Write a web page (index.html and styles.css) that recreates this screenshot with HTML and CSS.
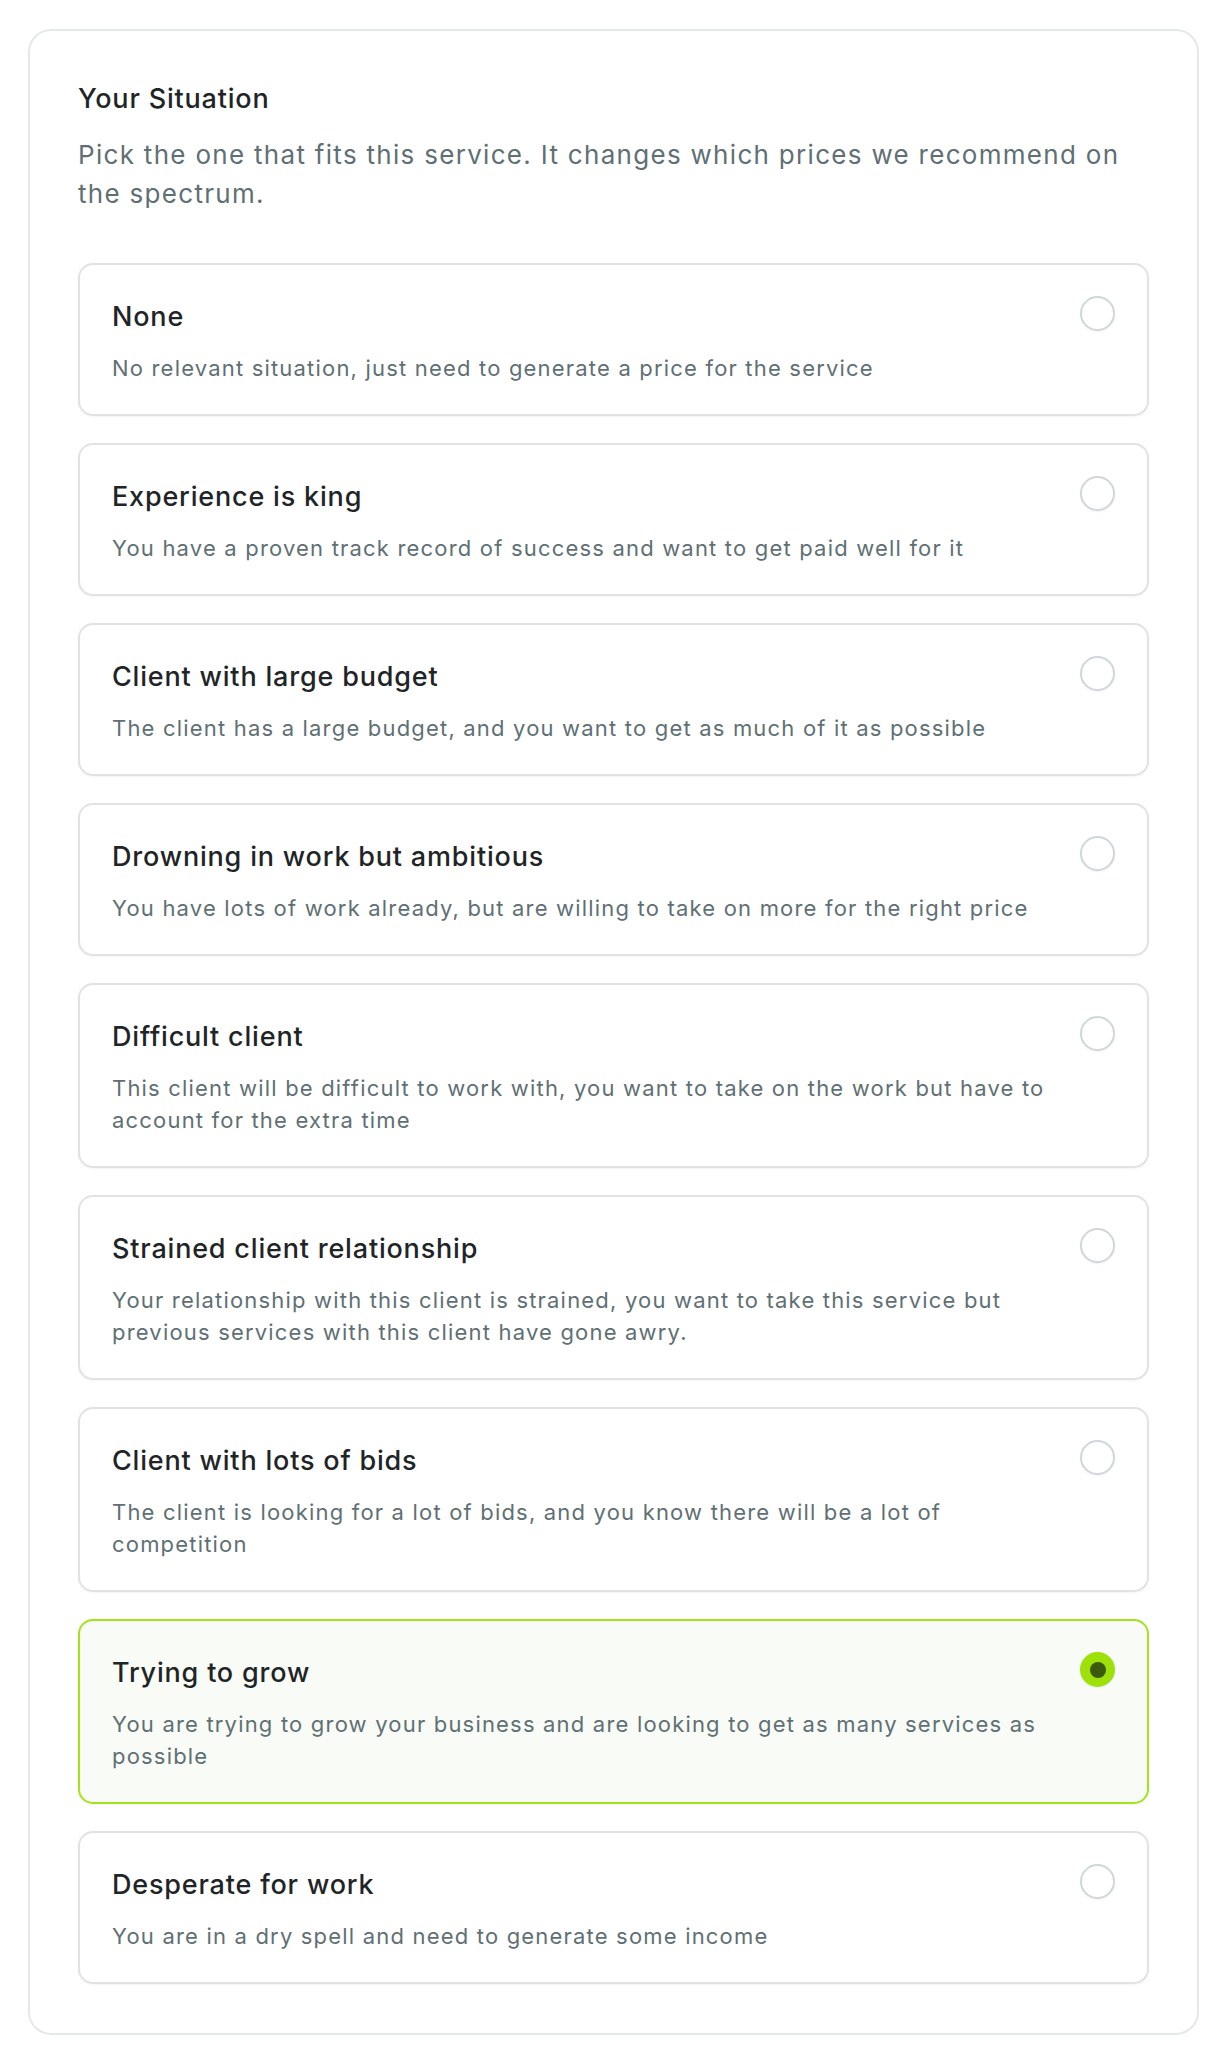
FILE: index.html
```html
<!DOCTYPE html>
<html lang="en">
<head>
    <meta charset="UTF-8">
    <meta name="viewport" content="width=device-width, initial-scale=1.0">
    <title>Your Situation</title>
    <link rel="stylesheet" href="styles.css">
</head>
<body>
    <div class="panel">
        <h2 class="panel-title">Your Situation</h2>
        <p class="panel-desc">Pick the one that fits this service. It changes which prices we recommend on the spectrum.</p>

        <div class="options">
            <div class="option">
                <div class="option-text">
                    <div class="option-title">None</div>
                    <div class="option-desc">No relevant situation, just need to generate a price for the service</div>
                </div>
                <span class="radio"></span>
            </div>

            <div class="option">
                <div class="option-text">
                    <div class="option-title">Experience is king</div>
                    <div class="option-desc">You have a proven track record of success and want to get paid well for it</div>
                </div>
                <span class="radio"></span>
            </div>

            <div class="option">
                <div class="option-text">
                    <div class="option-title">Client with large budget</div>
                    <div class="option-desc">The client has a large budget, and you want to get as much of it as possible</div>
                </div>
                <span class="radio"></span>
            </div>

            <div class="option">
                <div class="option-text">
                    <div class="option-title">Drowning in work but ambitious</div>
                    <div class="option-desc">You have lots of work already, but are willing to take on more for the right price</div>
                </div>
                <span class="radio"></span>
            </div>

            <div class="option">
                <div class="option-text">
                    <div class="option-title">Difficult client</div>
                    <div class="option-desc">This client will be difficult to work with, you want to take on the work but have to account for the extra time</div>
                </div>
                <span class="radio"></span>
            </div>

            <div class="option">
                <div class="option-text">
                    <div class="option-title">Strained client relationship</div>
                    <div class="option-desc">Your relationship with this client is strained, you want to take this service but previous services with this client have gone awry.</div>
                </div>
                <span class="radio"></span>
            </div>

            <div class="option">
                <div class="option-text">
                    <div class="option-title">Client with lots of bids</div>
                    <div class="option-desc">The client is looking for a lot of bids, and you know there will be a lot of competition</div>
                </div>
                <span class="radio"></span>
            </div>

            <div class="option selected">
                <div class="option-text">
                    <div class="option-title">Trying to grow</div>
                    <div class="option-desc">You are trying to grow your business and are looking to get as many services as possible</div>
                </div>
                <span class="radio"></span>
            </div>

            <div class="option">
                <div class="option-text">
                    <div class="option-title">Desperate for work</div>
                    <div class="option-desc">You are in a dry spell and need to generate some income</div>
                </div>
                <span class="radio"></span>
            </div>
        </div>
    </div>
</body>
</html>
```

FILE: styles.css
```css
body {
    margin: 0;
    background-color: #fff;
    font-family: Inter, "Noto Sans", sans-serif;
}
.panel {
    box-sizing: border-box;
    width: 1171px;
    margin: 29px 0 0 28px;
    padding: 48px 48px 49px;
    border: 2px solid #e4e8e8;
    border-radius: 23px;
}
.panel-title {
    margin: 0;
    font-size: 27px;
    line-height: 40px;
    font-weight: 500;
    letter-spacing: 0.03em;
    color: #1f2527;
}
.panel-desc {
    margin: 16px 0 0;
    font-size: 26px;
    line-height: 39px;
    letter-spacing: 0.05em;
    color: #5f7074;
}
.options {
    display: flex;
    flex-direction: column;
    gap: 27px;
    margin-top: 50px;
}
.option {
    display: flex;
    align-items: flex-start;
    gap: 24px;
    padding: 32px 32px 30px;
    border: 2px solid #e1e3e3;
    border-radius: 15px;
    background-color: #fff;
    box-shadow: 0 1px 2px rgba(0,0,0,0.05);
}
.option-text {
    flex: 1;
}
.option-title {
    font-size: 27px;
    line-height: 40px;
    font-weight: 500;
    letter-spacing: 0.03em;
    color: #1f2527;
}
.option-desc {
    margin-top: 15px;
    font-size: 22px;
    line-height: 32px;
    letter-spacing: 0.054em;
    color: #5f7074;
}
.radio {
    box-sizing: border-box;
    flex: none;
    width: 35px;
    height: 35px;
    margin-top: -1px;
    border: 2px solid #cfd7db;
    border-radius: 50%;
    background-color: #fff;
    box-shadow: 0 1px 2px rgba(0,0,0,0.06);
}
.option.selected {
    border-color: #a4e31a;
    background-color: #f9fbf6;
}
.option.selected .radio {
    display: flex;
    align-items: center;
    justify-content: center;
    border-color: #9ee10a;
    background-color: #9ee10a;
}
.option.selected .radio::after {
    content: "";
    width: 16px;
    height: 16px;
    border-radius: 50%;
    background-color: #3b5a0b;
}
```
